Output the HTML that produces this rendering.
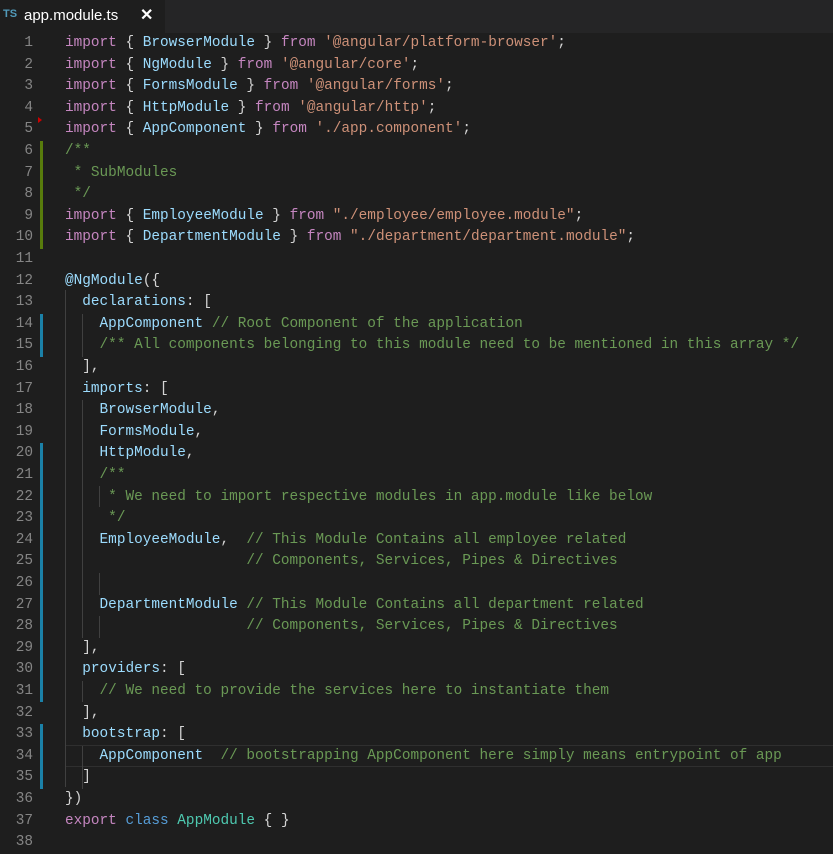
<!DOCTYPE html><html><head><style>
body{margin:0;background:#1e1e1e;width:833px;height:853px;overflow:hidden;position:relative;font-family:"Liberation Mono",monospace;}
.tabbar{position:absolute;left:0;top:0;width:833px;height:33px;background:#252526}
.tab{position:absolute;left:0;top:0;width:165px;height:33px;background:#1e1e1e;font-family:"Liberation Sans",sans-serif;}
.l{position:absolute;left:0;height:21.6px;line-height:21.6px;font-size:14.4px;white-space:pre;color:#d4d4d4}
.n{position:absolute;left:0;width:33px;text-align:right;color:#858585}
.c{position:absolute;left:65px}
.k{color:#c586c0}.i{color:#9cdcfe}.s{color:#ce9178}.m{color:#6a9955}.b{color:#569cd6}.t{color:#4ec9b0}
.g{position:absolute;width:1px;background:#404040}
.bar{position:absolute;left:40px;width:3px}
</style></head><body>
<div class="tabbar"><div class="tab">
<span style="position:absolute;left:3px;top:8px;font-size:11px;color:#519aba;font-weight:bold">TS</span>
<span style="position:absolute;left:24px;top:7px;font-size:15px;color:#fff">app.module.ts</span>
<span style="position:absolute;left:140px;top:5px;font-size:16px;color:#fff;font-weight:bold">✕</span>
</div></div>
<div class="bar" style="top:141px;height:108px;background:#587c0c"></div>
<div class="bar" style="top:314px;height:43px;background:#1b81a8"></div>
<div class="bar" style="top:443px;height:259px;background:#1b81a8"></div>
<div class="bar" style="top:724px;height:65px;background:#1b81a8"></div>
<div style="position:absolute;left:38px;top:117px;width:0;height:0;border-left:4px solid #c00;border-top:3px solid transparent;border-bottom:3px solid transparent"></div>
<div style="position:absolute;left:65px;top:745px;width:768px;height:20px;border:1px solid #2f2f2f;border-right:none"></div>
<div class="g" style="left:65px;top:290px;height:497px"></div>
<div class="g" style="left:82px;top:314px;height:43px"></div>
<div class="g" style="left:82px;top:400px;height:238px"></div>
<div class="g" style="left:99px;top:486px;height:21px"></div>
<div class="g" style="left:99px;top:573px;height:22px"></div>
<div class="g" style="left:99px;top:616px;height:22px"></div>
<div class="g" style="left:82px;top:681px;height:21px"></div>
<div class="g" style="left:82px;top:746px;height:43px"></div>
<div id="code"></div>
<script>
const L=[
'<span class="k">import</span> { <span class="i">BrowserModule</span> } <span class="k">from</span> <span class="s">\'@angular/platform-browser\'</span>;',
'<span class="k">import</span> { <span class="i">NgModule</span> } <span class="k">from</span> <span class="s">\'@angular/core\'</span>;',
'<span class="k">import</span> { <span class="i">FormsModule</span> } <span class="k">from</span> <span class="s">\'@angular/forms\'</span>;',
'<span class="k">import</span> { <span class="i">HttpModule</span> } <span class="k">from</span> <span class="s">\'@angular/http\'</span>;',
'<span class="k">import</span> { <span class="i">AppComponent</span> } <span class="k">from</span> <span class="s">\'./app.component\'</span>;',
'<span class="m">/**</span>',
'<span class="m"> * SubModules</span>',
'<span class="m"> */</span>',
'<span class="k">import</span> { <span class="i">EmployeeModule</span> } <span class="k">from</span> <span class="s">"./employee/employee.module"</span>;',
'<span class="k">import</span> { <span class="i">DepartmentModule</span> } <span class="k">from</span> <span class="s">"./department/department.module"</span>;',
'',
'<span class="i">@NgModule</span>({',
'  <span class="i">declarations</span>: [',
'    <span class="i">AppComponent</span> <span class="m">// Root Component of the application</span>',
'    <span class="m">/** All components belonging to this module need to be mentioned in this array */</span>',
'  ],',
'  <span class="i">imports</span>: [',
'    <span class="i">BrowserModule</span>,',
'    <span class="i">FormsModule</span>,',
'    <span class="i">HttpModule</span>,',
'    <span class="m">/**</span>',
'<span class="m">     * We need to import respective modules in app.module like below</span>',
'<span class="m">     */</span>',
'    <span class="i">EmployeeModule</span>,  <span class="m">// This Module Contains all employee related</span>',
'<span class="m">                     // Components, Services, Pipes &amp; Directives</span>',
'',
'    <span class="i">DepartmentModule</span> <span class="m">// This Module Contains all department related</span>',
'<span class="m">                     // Components, Services, Pipes &amp; Directives</span>',
'  ],',
'  <span class="i">providers</span>: [',
'    <span class="m">// We need to provide the services here to instantiate them</span>',
'  ],',
'  <span class="i">bootstrap</span>: [',
'    <span class="i">AppComponent</span>  <span class="m">// bootstrapping AppComponent here simply means entrypoint of app</span>',
'  ]',
'})',
'<span class="k">export</span> <span class="b">class</span> <span class="t">AppModule</span> { }',
''];
let h='';L.forEach((s,i)=>{h+='<div class="l" style="top:'+(33+i*21.6)+'px"><span class="n">'+(i+1)+'</span><span class="c">'+s+'</span></div>'});
document.getElementById('code').innerHTML=h;
</script>
</body></html>
